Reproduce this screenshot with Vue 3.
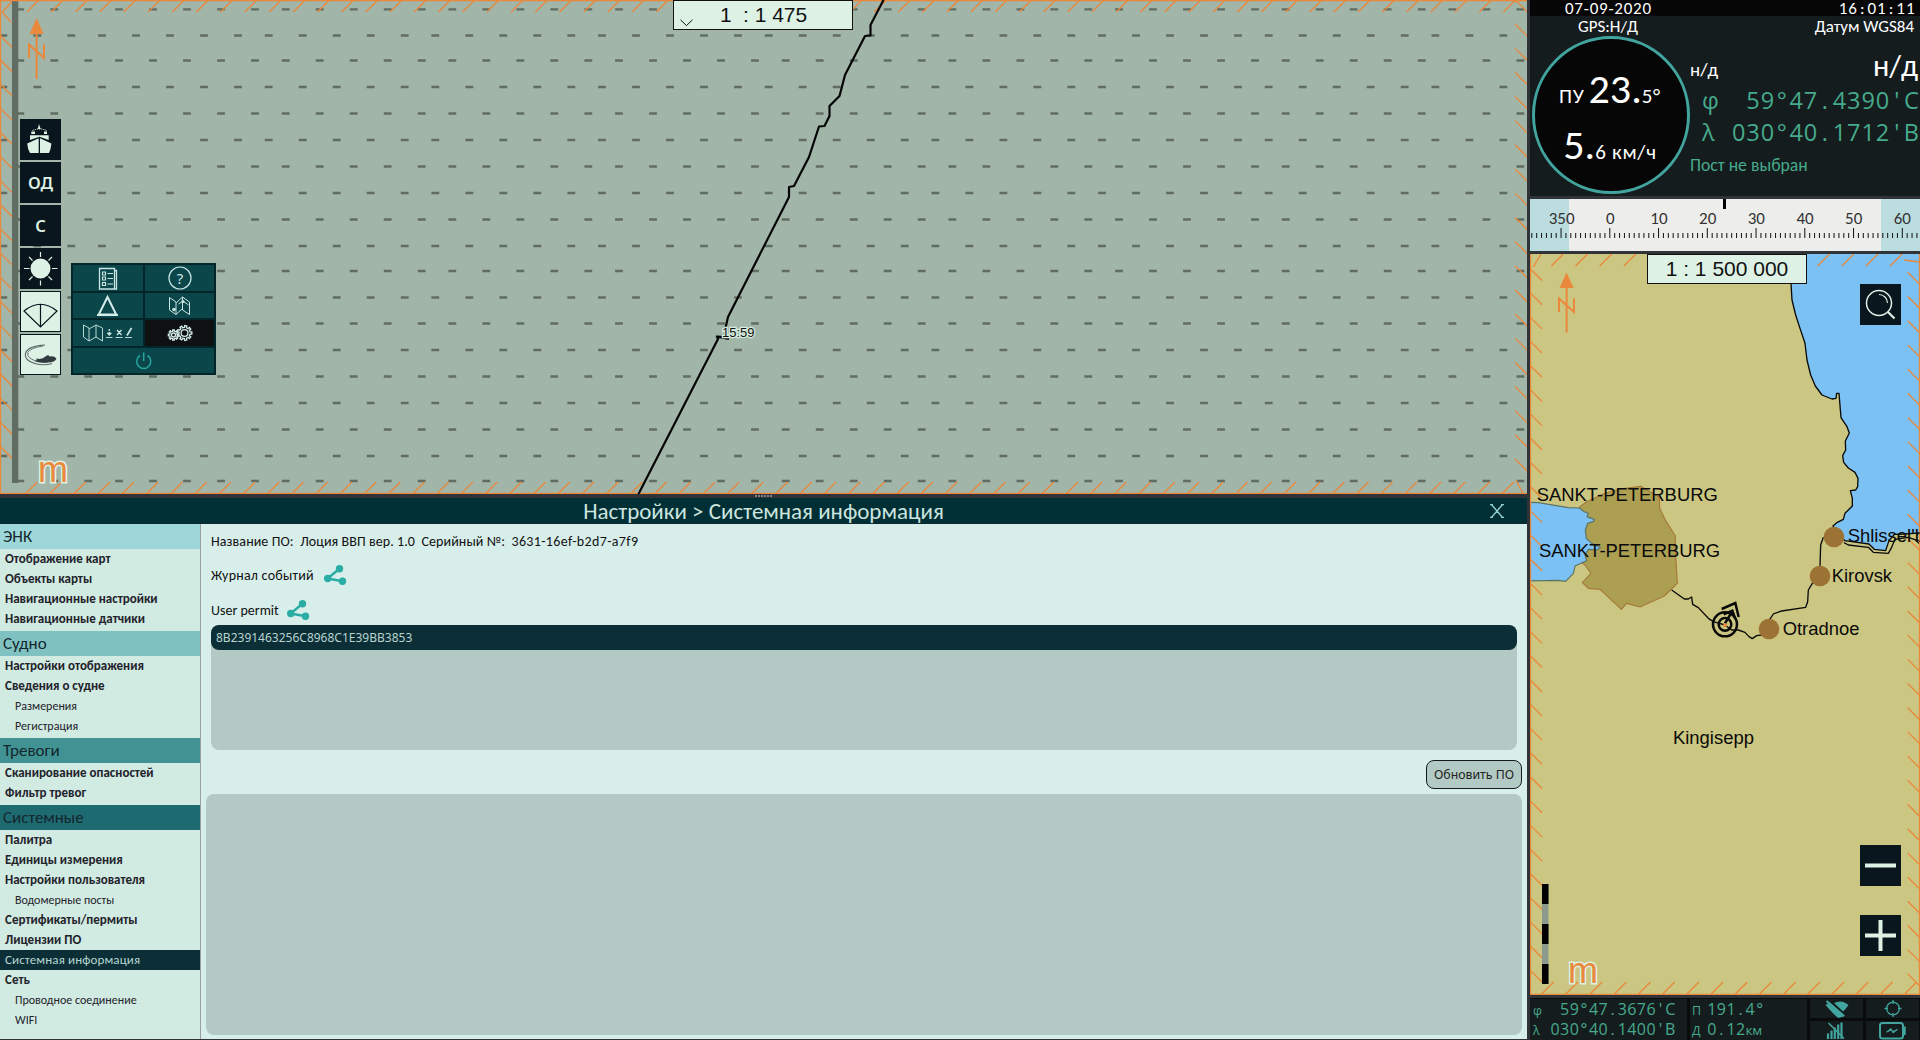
<script setup>
const range = (n) => Array.from({ length: n }, (_, i) => i)

/* seabed pattern: rows of short dashes, odd rows are shifted */
const rowYs = [9.3, 35.5, 60.5, 87, 113.5, 140, 166.5, 193, 219.5, 246, 271, 297.5, 323.5, 350, 376.5, 403, 429.5, 456, 481]
const steps = [0, 34, 68, 102, 136]
const dashPath = rowYs.map((y, r) => {
  const base = (r % 2 ? 102 : 119) - 166.67
  let d = ''
  for (let k = 0; k < 10; k++) {
    for (const s of steps) d += `M${(base + k * 166.67 + s - 3.9).toFixed(1)} ${y}h7.8`
  }
  return d
}).join('')

/* hatched frame of the main chart */
const mainHatch = [
  ...range(62).map((i) => `M${27 + 24.204 * i} 12l12-12`),
  ...range(62).map((i) => `M${25.3 + 24.204 * i} 494l12-12`),
  ...range(18).map((i) => `M0 ${59.5 + 24.17 * (i - 1)}l12 12`),
  ...range(20).map((i) => `M1515.3 ${24.17 * i}l12 12`),
  'M2 12l9 10M2.500 12l9-10M1516 480l7 13.500',
].join('')

/* hatched frame of the overview chart */
const sideHatch = [
  ...range(15).map((i) => `M${21.3 + 24.204 * i} 12l12-12`),
  ...range(16).map((i) => `M${11.7 + 24.204 * i} 740l12-12`),
  ...range(30).map((i) => `M0 ${14.5 + 24.19 * i}l12 12`),
  ...range(30).map((i) => `M377.7 ${18.3 + 24.19 * i}l12 12`),
  'M3.300 13l7.700-13M374.300 6l15.700 2',
].join('')

const ticks = range(80).map((i) => ({ x: 1.8 + 4.875 * i, major: (i - 6) % 10 === 0 }))
const headings = [350, 0, 10, 20, 30, 40, 50, 60].map((v, i) => ({ v, x: 31.6 + 48.68 * i }))

const sections = [
  { title: 'ЭНК', tone: 't1', items: [{ t: 'Отображение карт' }, { t: 'Объекты карты' }, { t: 'Навигационные настройки' }, { t: 'Навигационные датчики' }] },
  { title: 'Судно', tone: 't2', items: [{ t: 'Настройки отображения' }, { t: 'Сведения о судне' }, { t: 'Размерения', sub: true }, { t: 'Регистрация', sub: true }] },
  { title: 'Тревоги', tone: 't3', items: [{ t: 'Сканирование опасностей' }, { t: 'Фильтр тревог' }] },
  {
    title: 'Системные', tone: 't4', items: [
      { t: 'Палитра' }, { t: 'Единицы измерения' }, { t: 'Настройки пользователя' }, { t: 'Водомерные посты', sub: true },
      { t: 'Сертификаты/пермиты' }, { t: 'Лицензии ПО' }, { t: 'Системная информация', on: true }, { t: 'Сеть' },
      { t: 'Проводное соединение', sub: true }, { t: 'WIFI', sub: true },
    ],
  },
]

const gear = (cx, cy, r, R, n) => {
  let d = ''
  for (let i = 0; i < n; i++) {
    const a = (i * 2 * Math.PI) / n
    const w = Math.PI / n
    const p = [[r, a - w * 0.55], [R, a - w * 0.4], [R, a + w * 0.4], [r, a + w * 0.55]]
    for (const [q, t] of p) d += `${d ? 'L' : 'M'}${(cx + q * Math.cos(t)).toFixed(2)} ${(cy + q * Math.sin(t)).toFixed(2)}`
  }
  return d + 'Z'
}
const bigGear = gear(48, 13, 5.6, 7.4, 9)
const smallGear = gear(37, 15, 3.8, 5.2, 8)
</script>

<template>
  <div class="app">
    <div class="left">
      <section class="chart">
        <svg class="fill" width="1527" height="494">
          <path :d="dashPath" stroke="#616d62" stroke-width="2.3" />
          <rect x="12" y="0" width="6.300" height="483" fill="#616d62" />
          <path :d="mainHatch" class="hatch" />
          <path d="M.5 494V.5H1527M0 493.500H1527" class="hatch" />
          <path class="track" d="M883.500 0L870.500 25V35.500L865 36L845 75L839.500 96L829.500 106V116L824.500 126L819 126.500L809 157L794 186L789 187V197L728 317L725.500 328V337L717 336.500L718 339L638.500 494M716 336.500L729 339" />
          <text class="halo" x="722" y="337" font-size="13">15:59</text>
          <g class="north">
            <path d="M36.600 18L43.600 34H29.600Z" fill="#ea883b" />
            <path d="M36.600 33V79M29 58V44.500L44 58V44.500" />
          </g>
          <text class="m" x="38" y="482">m</text>
        </svg>

        <div class="scale scale-main">
          <svg width="13" height="8"><path d="M.5 .8L6.500 6.600L12.500 .8" fill="none" stroke="#111" /></svg>
          <span class="n1">1</span><span class="n2">: 1 475</span>
        </div>

        <div class="tools">
          <div class="tool">
            <svg width="41" height="41" fill="#ddf1e5">
              <path d="M18 9L19 5L20.300 9L21 10H17.500Z" />
              <path d="M12.500 11.500Q19.500 8.500 26.500 11.500" fill="none" stroke="#ddf1e5" stroke-dasharray="1.200 1" />
              <path d="M11.300 12.500H15V15H11.300ZM24 12.500H27V15H24Z" />
              <path d="M10 16.300H28.700V21L19.500 17.800L10 21Z" />
              <path d="M7.200 24.500L18.700 19.300V34H10Q7.600 30 7.200 24.500ZM31.400 24.500L20 19.300V34H29Q31 30 31.400 24.500Z" />
            </svg>
          </div>
          <div class="tool">ОД</div>
          <div class="tool">С</div>
          <div class="tool">
            <svg width="41" height="41">
              <circle cx="20.500" cy="20.500" r="10" fill="#ddf1e5" />
              <path d="M20.500 4V9M20.500 32.500V37.500M4 20.500H9.500M32 20.500H37.500M9 9L12.500 12.500M28.500 28.500L32 32M9 32L12.500 28.500M28.500 12.500L32 9" stroke="#ddf1e5" stroke-width="1.200" />
            </svg>
          </div>
          <div class="tool light">
            <svg width="39" height="39" fill="none" stroke="#0a161d" stroke-width="1.200">
              <path d="M3 19Q19.500 5.500 36 19L19.500 35ZM19.500 12.500V35" />
            </svg>
          </div>
          <div class="tool light">
            <svg width="39" height="39" fill="none">
              <path d="M24 10Q8 11 5 17Q2 25 14 28.500Q23 31 31 28.500" stroke="#5a6663" stroke-width="1.100" />
              <path d="M22 11Q9 13 6.800 17.500Q5.500 23 15 26Q22 28 27 27" stroke="#5a6663" stroke-width=".9" />
              <path d="M15 23.500Q21 25 24.500 21.500Q27.500 19 28.500 21.500Q33 20.500 35.500 23.500Q34 27.500 27 27.500Q19 28.500 13 26Q17 26 15 23.500Z" fill="#2f3b3e" />
            </svg>
          </div>
        </div>

        <div class="menu">
          <div class="cell">
            <svg width="70" height="26" fill="none" stroke="#c9e6e3">
              <path d="M26.500 3.500H41.500V24H26.500ZM41.500 5.500H43.500V24H41.500" stroke-width="1.300" />
              <path d="M29.500 7h3v3h-3zM29.500 12h3v3h-3zM29.500 17.500h3v3h-3zM34.500 8.500H40M34.500 13.500H40M34.500 19H40" stroke-width="1.200" />
            </svg>
          </div>
          <div class="cell">
            <svg width="69" height="26">
              <circle cx="35" cy="13" r="11" fill="none" stroke="#c9e6e3" stroke-width="1.200" />
              <text x="35" y="18.500" text-anchor="middle" font-size="15" fill="#c9e6e3" font-family="Noto Sans, sans-serif">?</text>
            </svg>
          </div>
          <div class="cell">
            <svg width="70" height="25" fill="none" stroke="#d3ece9" stroke-width="2"><path d="M34.500 4L25.800 21.500H43.200ZM24 22H45" /></svg>
          </div>
          <div class="cell">
            <svg width="69" height="25" fill="none" stroke="#c9e6e3">
              <path d="M24.500 4.500L31 9V21.500L24.500 17ZM31 21.500L38 15M37.500 4L31 10M37.500 4V17L44.500 21.500V9L37.500 4M33.500 11L38 8L43.500 12" />
              <circle cx="29" cy="16.500" r="1.800" fill="#c9e6e3" stroke="none" />
              <circle cx="38" cy="8.500" r="1.600" fill="#c9e6e3" stroke="none" />
            </svg>
          </div>
          <div class="cell">
            <svg width="70" height="26" fill="none" stroke="#c9e6e3" stroke-width=".9">
              <path d="M10.500 5L16 8V21L10.500 17ZM16 21L23 17V5L16 9M23 5L29.500 8V21L23 17" />
              <path d="M33 17.500H39.500M42.500 17.500H49.500M52 17.500H59" />
              <path d="M36.300 9V11M36.300 12V14.500M34.300 12.700L36.300 15L38.300 12.700M44 10L48.500 15M48.500 10L44 15" stroke-width="1.300" />
              <path d="M54 15.500L58.500 8" stroke-width="1.700" />
            </svg>
          </div>
          <div class="cell on">
            <svg width="69" height="26" fill="none" stroke="#d3ece9" stroke-width="1.300">
              <g transform="translate(-8.500 0)">
                <path :d="bigGear" /><circle cx="48" cy="13" r="3.400" />
                <path :d="smallGear" /><circle cx="37" cy="15" r="2" />
              </g>
            </svg>
          </div>
          <div class="cell wide">
            <svg width="141" height="25" fill="none" stroke="#24a49c" stroke-width="1.500"><path d="M67 7.500A7 7 0 1 0 74.500 7.500M70.700 4.500V13" /></svg>
          </div>
        </div>
      </section>

      <div class="splitter"><i v-for="i in 6" :key="i"></i></div>

      <section class="settings">
        <header class="titlebar">
          <h1>Настройки &gt; Системная информация</h1>
          <svg class="close" width="14" height="14"><path d="M1 0L13 14M13 0L1 14M0 .5H3M11 .5H14M0 13.500H3M11 13.500H14" stroke="#8fcfc9" stroke-width="1.400" /></svg>
        </header>
        <div class="body">
          <nav class="nav">
            <div v-for="s in sections" :key="s.title" class="group">
              <h2 :class="s.tone">{{ s.title }}</h2>
              <div v-for="it in s.items" :key="it.t" class="item" :class="{ sub: it.sub, on: it.on }">{{ it.t }}</div>
            </div>
          </nav>
          <div class="content">
            <p class="about"><span>Название ПО:</span><span>Лоция ВВП вер. 1.0</span><span>Серийный №:</span><span class="serial">3631-16ef-b2d7-a7f9</span></p>
            <p class="share log">Журнал событий
              <svg width="23" height="20" fill="#2aada5"><path d="M15.500 3.800L3.500 13.500L18.500 16.300" fill="none" stroke="#2aada5" stroke-width="2.500" /><circle cx="15.500" cy="3.800" r="3.700" /><circle cx="3.700" cy="13.500" r="3.700" /><circle cx="18.500" cy="16.300" r="3.700" /></svg>
            </p>
            <p class="share permit">User permit
              <svg width="23" height="20" fill="#2aada5"><path d="M15.500 3.800L3.500 13.500L18.500 16.300" fill="none" stroke="#2aada5" stroke-width="2.500" /><circle cx="15.500" cy="3.800" r="3.700" /><circle cx="3.700" cy="13.500" r="3.700" /><circle cx="18.500" cy="16.300" r="3.700" /></svg>
            </p>
            <div class="list"><div class="row">8B2391463256C8968C1E39BB3853</div></div>
            <button class="update">Обновить ПО</button>
            <div class="output"></div>
          </div>
        </div>
      </section>
    </div>

    <div class="right">
      <section class="info">
        <div class="clock">
          <span class="date">07-09-2020</span>
          <span class="cells time"><b v-for="(c, i) in '16:01:11'" :key="i">{{ c }}</b></span>
        </div>
        <div class="sources"><span class="gps">GPS:Н/Д</span><span>Датум WGS84</span></div>
        <div class="readings">
          <div class="dial">
            <div class="line"><small class="pu">ПУ</small><strong>23.</strong><small>5°</small></div>
            <div class="line speed"><strong>5.</strong><small>6 км/ч</small></div>
          </div>
          <div class="values">
            <div class="depth"><span>н/д</span><span class="big">н/д</span></div>
            <div class="coord"><i>φ</i><span class="cells"><b v-for="(c, i) in '59°47.4390\'С'" :key="i">{{ c }}</b></span></div>
            <div class="coord"><i>λ</i><span class="cells"><b v-for="(c, i) in '030°40.1712\'В'" :key="i">{{ c }}</b></span></div>
            <div class="post">Пост не выбран</div>
          </div>
        </div>
      </section>

      <section class="tape">
        <svg width="390" height="52">
          <rect width="390" height="52" fill="#ededeb" />
          <rect width="39" height="52" fill="#bbdde0" /><rect x="351" width="39" height="52" fill="#bbdde0" />
          <rect x="193" width="3" height="10" />
          <rect v-for="t in ticks" :key="t.x" :x="t.x - 0.5" :y="t.major ? 29 : 34" width="1" :height="t.major ? 10 : 5" fill="#111" />
          <text v-for="h in headings" :key="h.v" :x="h.x" y="25" text-anchor="middle">{{ h.v }}</text>
        </svg>
      </section>

      <section class="overview">
        <svg class="fill" width="390" height="741">
          <g transform="translate(-5 -4) scale(.33333)" stroke-linejoin="round">
            <path d="M798 0V100L801 150L812 195L825 235L840 280L846 330L857 375L871 408L891 435L921 447L933 445L935 430H942L948 503L966 530L973 549L961 573L962 600L953 617L956 637L970 654L990 667L999 685L998 710L992 720L976 722L982 745V768L960 790L955 808L937 817L924 828L935 855L960 872L1032 882L1048 898L1082 902L1092 872L1108 853L1140 852L1190 848V0Z" fill="#7bc1f3" />
            <path d="M798 0V100L801 150L812 195L825 235L840 280L846 330L857 375L871 408L891 435L921 447L933 445L935 430H942L948 503L966 530L973 549L961 573L962 600L953 617L956 637L970 654L990 667L999 685L998 710L992 720L976 722L982 745V768L960 790L955 808L937 817L924 828L935 855L960 872L1032 882L1048 898L1082 902L1092 872L1108 853L1140 852L1190 848" class="coast" />
            <path d="M957 878L970 885L1030 892L1045 907L1090 910L1100 892L1110 868L1150 862L1172 870L1190 888" class="coast" />
            <path d="M163 772L185 755L240 730L285 717L347 709L403 742L404 775L422 812L451 858L451 900L457 1000L418 1038L345 1071L305 1060L289 1078L225 1018L190 1015L172 998L198 970L180 945L160 930Z" fill="#ac9f52" stroke="#a5793a" stroke-width="3.500" />
            <path d="M0 757L40 758L130 773L163 774L178 785L190 790L186 800L208 808L205 815L188 820L181 840L184 865L200 880L227 893L215 900L190 898L180 915L185 932L150 948L145 970L122 994L100 991L0 993Z" fill="#7bc1f3" stroke="#5c7464" stroke-width="3.500" />
            <path d="M895 862L887 885L884 978L862 1000L850 1020L848 1055L842 1072L770 1083L745 1092L732 1112V1137L710 1155L695 1157L682 1166L672 1160L660 1147L640 1140H620L600 1125L565 1115L550 1105L520 1073L503 1063L500 1041L490 1047H478L440 1020" class="coast" />
          </g>
          <path :d="sideHatch" class="hatch" />
          <path d="M.5 0V740M0 740.300H390M389.500 0V740" class="hatch" />
          <g transform="translate(-5 -4) scale(.33333)">
            <g fill="#9d7335"><circle cx="927" cy="861" r="31" /><circle cx="885" cy="978" r="31" /><circle cx="732" cy="1137" r="31" /></g>
            <g class="place">
              <text x="35" y="753">SANKT-PETERBURG</text>
              <text x="42" y="921">SANKT-PETERBURG</text>
              <text x="968" y="875">Shlissel'burg</text>
              <text x="920" y="997">Kirovsk</text>
              <text x="773" y="1155">Otradnoe</text>
              <text x="444" y="1483">Kingisepp</text>
            </g>
            <g fill="none" stroke="#0a0a0a" stroke-width="7.500">
              <circle cx="600" cy="1123" r="36" /><circle cx="600" cy="1123" r="19" />
              <path d="M600 1120L624 1080M590 1077L631 1059L641 1101M596 1093L622 1082L630 1104" />
            </g>
            <circle cx="600" cy="1126" r="6" fill="#ea883b" />
          </g>
          <g class="north" transform="translate(0 4.500)">
            <path d="M36.600 14L43.600 29.500H29.600Z" fill="#ea883b" />
            <path d="M36.600 29V74M29 53.500V40L44 53.500V40" />
          </g>
          <text class="m" x="38" y="729">m</text>
          <rect x="12" y="630" width="6.500" height="100" fill="#8b9a8c" />
          <path d="M12 630h6.500v20h-6.500zM12 670h6.500v20h-6.500zM12 710h6.500v20h-6.500z" />
        </svg>
        <div class="scale scale-side">1 : 1 500 000</div>
        <div class="zooms">
          <div class="tool find">
            <svg width="41" height="41" fill="none" stroke="#ddf1e5">
              <circle cx="19" cy="19" r="12.500" stroke-width="1.500" /><path d="M19 10.500A8.500 8.500 0 0 1 27.500 19" stroke-width="1.200" /><path d="M28 28L34.500 34.500" stroke-width="2.200" />
            </svg>
          </div>
          <div class="tool minus"><svg width="41" height="41"><path d="M5 20.500H36" stroke="#ddf1e5" stroke-width="4" /></svg></div>
          <div class="tool plus"><svg width="41" height="41"><path d="M5 20.500H36M20.500 5V36" stroke="#ddf1e5" stroke-width="4" /></svg></div>
        </div>
      </section>

      <footer class="status">
        <div class="pos">
          <div class="sline"><i>φ</i><span class="cells"><b v-for="(c, i) in '59°47.3676\'С'" :key="i">{{ c }}</b></span></div>
          <div class="sline"><i>λ</i><span class="cells"><b v-for="(c, i) in '030°40.1400\'В'" :key="i">{{ c }}</b></span></div>
        </div>
        <div class="rel">
          <div class="sline"><i>П</i><span class="cells"><b v-for="(c, i) in '191.4°'" :key="i">{{ c }}</b></span></div>
          <div class="sline"><i>Д</i><span class="cells"><b v-for="(c, i) in '0.12'" :key="i">{{ c }}</b></span><em>км</em></div>
        </div>
        <div class="icons">
          <div><svg width="53" height="19"><path d="M15.500 6Q18 4 20 3.500L35 17L28.500 19Q26 18 15.500 6ZM24 4Q32 0 38.500 6Q36 10 33 12.500Z" fill="#41a49e" /><path d="M16.500 2L34 17" stroke="#41a49e" stroke-width="2.200" /></svg></div>
          <div><svg width="53" height="19" fill="none" stroke="#41a49e" stroke-width="1.300"><circle cx="27" cy="9.500" r="6.300" /><path d="M27 1V5M27 14V18M18.500 9.500H22M32 9.500H35.500" /></svg></div>
          <div><svg width="53" height="19" stroke="#41a49e"><path d="M18 18V12.500M21.500 18V9.500M24.800 18V6.500M28.200 18V3.500M31.500 18V1.500" stroke-width="2.200" /><path d="M18.500 2L34 17.500" stroke-width="1.600" /></svg></div>
          <div><svg width="53" height="19" fill="none" stroke="#41a49e"><rect x="14" y="2" width="23" height="15.500" rx="2.500" stroke-width="2" /><path d="M38.500 5.500V14" stroke-width="2.500" /><path d="M20.500 11L25 7.500L26.500 10.500L31.500 8.500L27 12L25.500 9Z" stroke-width="1" fill="#41a49e" /></svg></div>
        </div>
      </footer>
    </div>
  </div>
</template>

<style>
body { margin: 0; overflow: hidden; }
</style>

<style scoped>
.app {
  width: 1920px;
  height: 1040px;
  display: grid;
  grid-template-columns: 1527px 390px;
  column-gap: 3px;
  background: #303438;
  font-family: Carlito, Lato, "Noto Sans", sans-serif;
  overflow: hidden;
}
p, h1, h2 { margin: 0; font-weight: 400; }
svg { display: block; flex: none; }
.left { display: grid; grid-template-rows: 494px 4px 541px; height: 1040px; }
.fill { display: block; }
.chart { position: relative; background: #a1b5a8; overflow: hidden; }
.hatch { fill: none; stroke: #ea883b; stroke-width: 1.3; }
.track { fill: none; stroke: #050505; stroke-width: 2.2; stroke-linejoin: round; }
.halo { font-family: "Liberation Sans", Arial, sans-serif; paint-order: stroke; stroke: #d6ecdf; stroke-width: 2.5px; fill: #111; }
.north { fill: none; stroke: #ea883b; stroke-width: 2; }
.north path:first-child { stroke: none; }
.m {
  font: 36px "Liberation Sans", Arial, sans-serif;
  fill: #ea883b;
  stroke: #ddf1e5;
  stroke-width: 3px;
  paint-order: stroke;
}
.scale {
  position: absolute;
  box-sizing: border-box;
  border: 1px solid #111;
  background: #ddf1e5;
  color: #111;
  font: 21px/27px "Liberation Sans", Arial, sans-serif;
  height: 30px;
  white-space: pre;
}
.scale-main { left: 673px; top: 0; width: 180px; display: flex; padding-left: 6px; }
.scale-main svg { margin-top: 18px; }
.n1 { margin-left: 27px; width: 23px; line-height: 28px; }
.n2 { line-height: 28px; }
.scale-side { left: 117px; top: 0; width: 160px; text-align: center; line-height: 28px; }

.tools { position: absolute; left: 20px; top: 119px; display: flex; flex-direction: column; gap: 2px; }
.tool {
  width: 41px;
  height: 41px;
  background: #0a161d;
  color: #ddf1e5;
  display: flex;
  align-items: center;
  justify-content: center;
  font: 600 16.5px/43px "Noto Sans", sans-serif;
}
.tool.light { box-sizing: border-box; border: 1px solid #0a161d; background: #ddf1e5; }

.menu {
  position: absolute;
  left: 71px;
  top: 263px;
  box-sizing: border-box;
  width: 145px;
  height: 112px;
  padding: 2px;
  background: #022529;
  display: grid;
  grid-template-columns: 70px 69px;
  grid-template-rows: 26px 25px 26px 25px;
  gap: 2px;
}
.cell { background: #0b464a; overflow: hidden; }
.cell.on { background: #0f1012; }
.cell.wide { grid-column: 1 / 3; }

.splitter { background: #303438; display: flex; justify-content: center; align-items: center; gap: 1px; }
.splitter i { width: 2px; height: 2px; background: #7e8486; }

.settings { display: grid; grid-template-rows: 26px 515px; }
.titlebar {
  box-sizing: border-box;
  background: #002f36;
  border-bottom: 1px solid #0d2a33;
  display: grid;
  grid-template-columns: 1fr auto;
  position: relative;
}
.titlebar h1 { text-align: center; font-size: 23px; line-height: 26px; color: #cde4df; }
.close { position: absolute; right: 23px; top: 6px; }
.body { display: grid; grid-template-columns: 200px 1px 1326px; }
.nav { background: #d1eae2; color: #222; }
.group { padding-bottom: 2px; }
.nav h2 { height: 25px; line-height: 26px; font-size: 17px; padding-left: 3px; color: #14262e; }
.t1 { background: #9dd7da; }
.t2 { background: #80c1c1; }
.t3 { background: #419393; }
.t4 { background: #1e6a71; }
.item { height: 20px; line-height: 19px; padding-left: 5px; font-size: 13px; font-weight: 700; color: #23232b; }
.item.sub { font-weight: 400; font-size: 12px; line-height: 20px; padding-left: 15px; }
.item.on { background: #0b2e37; color: #b5d5cf; font-weight: 400; letter-spacing: .12px; }
.content {
  grid-column: 3;
  background: #d8eeeb;
  display: flex;
  flex-direction: column;
  padding: 0 5px;
  color: #111;
  box-shadow: -1px 0 0 #9b9f9f;
  font-size: 14px;
}
.about { display: flex; gap: 6.5px; margin: 8px 0 0 5px; height: 20px; line-height: 20px; letter-spacing: .08px; }
.serial { letter-spacing: .35px; }
.share { display: flex; align-items: center; gap: 10px; margin-left: 5px; }
.log { margin-top: 11px; height: 24px; letter-spacing: .22px; }
.permit { margin-top: 12px; height: 22px; gap: 8px; }
.list { margin: 4px 5px 0; height: 125px; flex: none; border-radius: 8px; background: #b3cac4; }
.row {
  height: 25px;
  border-radius: 8px;
  background: #0b2e37;
  color: #b9d3cf;
  font: 12px/25px "Noto Sans", sans-serif;
  padding-left: 5px;
}
.update {
  align-self: flex-end;
  box-sizing: border-box;
  width: 96px;
  height: 29px;
  margin-top: 10px;
  padding: 0;
  border: 1px solid #14181c;
  border-radius: 8px;
  background: #b3cac4;
  color: #222;
  font: 12.3px/26px "Noto Sans", sans-serif;
  white-space: nowrap;
}
.output { margin-top: 5px; height: 241px; border-radius: 8px; background: #b3cac4; }

.right { display: grid; grid-template-rows: 196px 52px 741px 42px; row-gap: 3px; }
.info { background: #151c1e; color: #fff; display: flex; flex-direction: column; font-size: 17px; }
.clock { background: #060606; height: 16px; line-height: 17px; display: flex; justify-content: space-between; padding: 0 5px 0 35px; }
.date { letter-spacing: .75px; }
.cells { display: inline-flex; }
.cells b { font-weight: 400; text-align: center; width: 9.6px; display: flex; justify-content: center; }
.sources { height: 20px; line-height: 22px; display: flex; justify-content: space-between; padding: 0 6px 0 48px; }
.readings { display: flex; height: 160px; }
.dial {
  box-sizing: border-box;
  flex: none;
  width: 158px;
  height: 158px;
  margin-left: 2px;
  border: 3px solid #41a49e;
  border-radius: 50%;
  background: #060606;
  padding-top: 25px;
}
.line { display: flex; align-items: baseline; justify-content: center; height: 56px; line-height: 50px; white-space: pre; padding-right: 2px; }
.line strong { font-size: 42px; font-weight: 400; }
.line small { font-size: 21px; letter-spacing: .7px; }
.pu { margin-right: 4px; }
.values { flex: 1; position: relative; color: #46aa8c; }
.depth { display: flex; justify-content: space-between; align-items: baseline; color: #fff; height: 48px; line-height: 60px; font-size: 19px; padding: 0 2px 0 0; }
.depth .big { font-size: 30.5px; }
.coord { display: flex; justify-content: space-between; height: 32px; line-height: 32px; font-family: "Open Sans", "Noto Sans", sans-serif; font-size: 23.5px; padding-right: 1.5px; }
.coord i { font-style: normal; margin-left: 12px; }
.coord .cells b { width: 14.4px; }
.post { margin-top: 2px; font-size: 17.7px; line-height: 30px; }

.tape text { font-size: 17px; fill: #333; }
.overview { position: relative; background: #cbc681; overflow: hidden; }
.coast { fill: none; stroke: #0a0a0a; stroke-width: 4; }
.place { font: 55.3px "Liberation Sans", Arial, sans-serif; fill: #0a0a0a; }
.zooms { position: absolute; left: 330px; top: 30px; }
.minus { margin-top: 520px; }
.plus { margin-top: 29px; }

.status {
  background: #0a0b0b;
  padding: 1px 1px 1px 0;
  display: grid;
  grid-template-columns: 157px 117px 109px;
  column-gap: 3px;
  color: #46aa8c;
  font-family: "Open Sans", "Noto Sans", sans-serif;
}
.pos, .rel { background: #151c1e; font-size: 16px; }
.sline { display: flex; height: 20px; line-height: 21px; }
.sline i { font-style: normal; font-size: 12.5px; width: 12px; margin-left: 3px; line-height: 24px; }
.pos .cells { margin-left: auto; margin-right: 12px; }
.rel .sline i { width: 15px; margin-left: 2px; }
.sline em { font-style: normal; font-size: 13.5px; line-height: 23px; }
.icons { display: grid; grid-template-columns: 53px 53px; grid-template-rows: 19px 19px; gap: 3px; }
.icons div { background: #151c1e; overflow: hidden; }
</style>
